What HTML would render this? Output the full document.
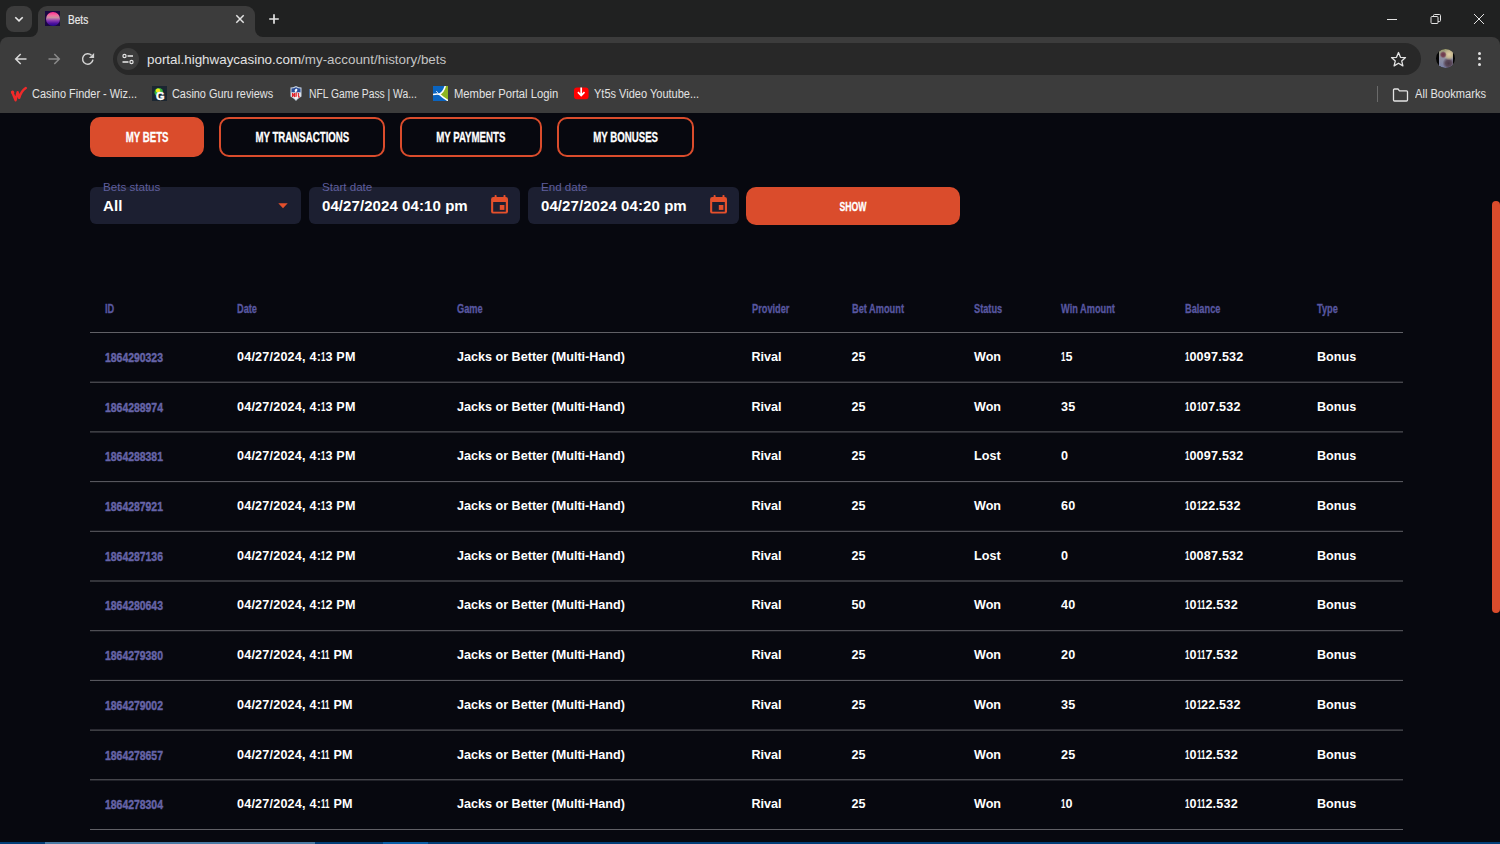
<!DOCTYPE html>
<html><head><meta charset="utf-8">
<style>
*{margin:0;padding:0;box-sizing:border-box}
html,body{width:1500px;height:844px;overflow:hidden;background:#07080f;font-family:"Liberation Sans",sans-serif}
.abs{position:absolute}
#tabstrip{position:absolute;left:0;top:0;width:1500px;height:50px;background:#202121}
#toolbar{position:absolute;left:0;top:37px;width:1500px;height:76px;background:#3c3c3c}
#page{position:absolute;left:0;top:113px;width:1500px;height:731px;background:#07080f;overflow:hidden}
.tbtxt{color:#e3e3e3;font-size:12px;white-space:nowrap}
.bm{position:absolute;top:85.5px;height:16px;font-size:12px;transform-origin:0 0;color:#e3e3e3;white-space:nowrap;line-height:16px}
.tabbtn{position:absolute;top:117px;height:40px;border-radius:10px;border:2px solid #da4c2c;color:#fff;font-weight:bold;font-size:14.5px;line-height:15px;display:flex;align-items:center;justify-content:center;padding-top:1px}
.cond{display:inline-block;transform:scaleX(0.667);white-space:nowrap;-webkit-text-stroke:0.3px #fff}
.field{position:absolute;top:187px;height:37px;background:#1c1f31;border-radius:6px}
.flabel{position:absolute;top:180px;font-size:11.6px;color:#5f5e9c;white-space:nowrap}
.fval{position:absolute;top:197px;font-size:15px;color:#fff;font-weight:bold;white-space:nowrap;letter-spacing:0.08px}
.th{position:absolute;top:302px;font-size:13px;line-height:13px;color:#5857a0;font-weight:bold;white-space:nowrap;transform:scaleX(0.71);transform-origin:0 0;-webkit-text-stroke:0.3px #5857a0}
.hl{position:absolute;left:90px;width:1313px;height:1px;background:#5c5c62}
.num{letter-spacing:0.2px}
.a1,.m1{display:inline-block;width:4.4px;transform:scaleX(0.63);transform-origin:0 50%;letter-spacing:0}

.td{position:absolute;font-size:12.6px;line-height:13px;color:#fff;font-weight:bold;white-space:nowrap}
.tid{position:absolute;font-size:13.2px;line-height:13px;color:#6664a8;font-weight:bold;white-space:nowrap;transform:scaleX(0.79);transform-origin:0 0;-webkit-text-stroke:0.45px #6664a8}
</style></head><body>
<div id="tabstrip"></div>
<div id="toolbar" style="border-radius:8px 8px 0 0"></div>
<!-- tab search -->
<div class="abs" style="left:6px;top:6px;width:26px;height:26px;border-radius:8px;background:#3c3c3c"></div>
<svg class="abs" style="left:13px;top:13px" width="12" height="12" viewBox="0 0 12 12"><path d="M2.3 4.2 L6 7.9 L9.7 4.2" stroke="#e8e8e8" stroke-width="1.6" fill="none"/></svg>
<!-- active tab -->
<div class="abs" style="left:30px;top:29px;width:233px;height:9px;background:#3c3c3c"></div>
<div class="abs" style="left:30px;top:29px;width:8px;height:8px;border-radius:0 0 8px 0;background:#202121"></div>
<div class="abs" style="left:255px;top:29px;width:8px;height:8px;border-radius:0 0 0 8px;background:#202121"></div>
<div class="abs" style="left:38px;top:6px;width:217px;height:32px;border-radius:9px 9px 0 0;background:#3c3c3c"></div>
<div class="abs" style="left:45px;top:11px;width:15px;height:15px;background:#1a0840"></div>
<div class="abs" style="left:45.5px;top:11.5px;width:14px;height:14px;border-radius:50%;background:linear-gradient(#ff2a90 0%,#f070a0 25%,#c890a0 40%,#9040b0 60%,#5010a0 80%,#20088a 100%)"></div>
<div class="abs tbtxt" style="left:68px;top:14px;font-size:12px;line-height:12px;color:#e8e8e8;transform:scaleX(0.84);transform-origin:0 0;-webkit-text-stroke:0.2px #e8e8e8">Bets</div>
<svg class="abs" style="left:235px;top:14px" width="10" height="10" viewBox="0 0 10 10"><path d="M1.3 1.3 L8.7 8.7 M8.7 1.3 L1.3 8.7" stroke="#e3e3e3" stroke-width="1.5"/></svg>
<svg class="abs" style="left:268px;top:13px" width="12" height="12" viewBox="0 0 12 12"><path d="M6 1.2 V10.8 M1.2 6 H10.8" stroke="#e3e3e3" stroke-width="1.7"/></svg>
<!-- window controls -->
<div class="abs" style="left:1387px;top:19px;width:10px;height:1px;background:#e3e3e3"></div>
<svg class="abs" style="left:1430px;top:13px" width="12" height="12" viewBox="0 0 12 12"><rect x="1" y="3.5" width="7" height="7" rx="1" stroke="#e3e3e3" stroke-width="1" fill="none"/><path d="M3.5 3.5 V2.5 a1 1 0 0 1 1-1 H9.5 a1 1 0 0 1 1 1 V7.5 a1 1 0 0 1-1 1 H8" stroke="#e3e3e3" stroke-width="1" fill="none"/></svg>
<svg class="abs" style="left:1473px;top:13px" width="12" height="12" viewBox="0 0 12 12"><path d="M1 1 L11 11 M11 1 L1 11" stroke="#e3e3e3" stroke-width="1"/></svg>

<!-- nav -->
<svg class="abs" style="left:13px;top:51px" width="16" height="16" viewBox="0 0 16 16"><path d="M13.5 8 H3 M7.7 3 L2.7 8 L7.7 13" stroke="#d8d8d8" stroke-width="1.5" fill="none"/></svg>
<svg class="abs" style="left:46px;top:51px" width="16" height="16" viewBox="0 0 16 16"><path d="M2.5 8 H13 M8.3 3 L13.3 8 L8.3 13" stroke="#8a8a8a" stroke-width="1.5" fill="none"/></svg>
<svg class="abs" style="left:80px;top:51px" width="16" height="16" viewBox="0 0 16 16"><path d="M12.95 8.72 A5.2 5.2 0 1 1 11.48 4.32" stroke="#d2d2d2" stroke-width="1.5" fill="none"/><path d="M14.1 1.9 V7.1 H8.9 Z" fill="#d2d2d2"/></svg>
<!-- omnibox -->
<div class="abs" style="left:113px;top:43px;width:1308px;height:32px;border-radius:16px;background:#282828"></div>
<div class="abs" style="left:117px;top:48px;width:22px;height:22px;border-radius:50%;background:#3c3c3c"></div>
<svg class="abs" style="left:121px;top:52px" width="14" height="14" viewBox="0 0 14 14"><circle cx="3.5" cy="4" r="1.6" stroke="#e3e3e3" stroke-width="1.2" fill="none"/><path d="M6.5 4 H12" stroke="#e3e3e3" stroke-width="1.6"/><circle cx="10.5" cy="10" r="1.6" stroke="#e3e3e3" stroke-width="1.2" fill="none"/><path d="M1.5 10 H7.5" stroke="#e3e3e3" stroke-width="1.6"/></svg>
<div class="abs" style="left:147px;top:52px;font-size:13.4px;color:#e3e3e3;white-space:nowrap">portal.highwaycasino.com<span style="color:#c4c4c4">/my-account/history/bets</span></div>
<svg class="abs" style="left:1390px;top:51px" width="17" height="17" viewBox="0 0 17 17"><path d="M8.5 1.5 L10.5 6.3 L15.5 6.6 L11.7 9.9 L12.9 14.9 L8.5 12.2 L4.1 14.9 L5.3 9.9 L1.5 6.6 L6.5 6.3 Z" stroke="#e3e3e3" stroke-width="1.3" fill="none" stroke-linejoin="round"/></svg>
<div class="abs" style="left:1436px;top:49px;width:19px;height:19px;border-radius:50%;background:#050505;overflow:hidden"><div style="position:absolute;left:2.5px;top:0px;width:14px;height:19px;background:radial-gradient(circle at 30% 30%,#6a3848 0,#7a4858 2px,transparent 3.5px),radial-gradient(circle at 72% 28%,#e0d0a8 0,#c8b890 3px,transparent 6px),radial-gradient(circle at 68% 75%,#4a3848 0,#5a4858 3px,transparent 6px),linear-gradient(180deg,#a0a070 0%,#9090a0 45%,#7a80a8 100%)"></div></div>
<div class="abs" style="left:1478px;top:52px;width:3px;height:3px;border-radius:50%;background:#e3e3e3"></div>
<div class="abs" style="left:1478px;top:57px;width:3px;height:3px;border-radius:50%;background:#e3e3e3"></div>
<div class="abs" style="left:1478px;top:63px;width:3px;height:3px;border-radius:50%;background:#e3e3e3"></div>
<!-- bookmarks -->
<svg class="abs" style="left:8px;top:82px" width="24" height="24" viewBox="0 0 24 24"><path d="M4.2 10 L7.6 18.3 L9.6 10.2 L11.2 15.8 Q13.5 8.5 17.8 6" stroke="#f02a2a" stroke-width="2.4" fill="none" stroke-linejoin="round" stroke-linecap="round"/><circle cx="4.6" cy="10.2" r="1.6" fill="#f02a2a"/></svg>
<div class="bm" style="left:32px;transform:scaleX(0.911)">Casino Finder - Wiz...</div>
<div class="abs" style="left:152px;top:86px;width:15px;height:15px;background:#1b2631"></div>
<svg class="abs" style="left:152px;top:86px" width="15" height="15" viewBox="0 0 15 15"><circle cx="6.8" cy="6.2" r="4.3" fill="#35b53c"/><circle cx="6" cy="4.6" r="2.2" fill="#f2e81a"/><path d="M5.5 14 V9 Q5.5 6.3 8.5 6.3 H12.5 V14 Z" fill="#1b2631"/></svg>
<div class="abs" style="left:156px;top:90.5px;font-size:11px;line-height:11px;font-weight:bold;color:#fff;-webkit-text-stroke:0.4px #fff">G</div>
<div class="bm" style="left:172px;transform:scaleX(0.908)">Casino Guru reviews</div>
<svg class="abs" style="left:290px;top:86px" width="12" height="15" viewBox="0 0 12 15"><path d="M0.5 1.5 Q3 1.5 6 0 Q9 1.5 11.5 1.5 V10.5 Q8 12.5 6 15 Q4 12.5 0.5 10.5 Z" fill="#c8d4e4"/><path d="M1.5 2.5 Q3.5 2.5 6 1.2 Q8.5 2.5 10.5 2.5 V6.5 H1.5 Z" fill="#2a4c96"/><ellipse cx="6" cy="4.3" rx="1.2" ry="1.7" fill="#fff" transform="rotate(30 6 4.3)"/><path d="M1.5 6.5 H10.5 V10 Q8 11.5 6 13.5 Q4 11.5 1.5 10 Z" fill="#f0f0f0"/><path d="M2.5 7 V11 M2.5 7 L4.5 11 V7 M6 7 V11 M6 7 H7.5 M6 9 H7.3 M8.6 7 V11 H10" stroke="#e0242c" stroke-width="1.1" fill="none"/></svg>
<div class="bm" style="left:309px;transform:scaleX(0.858)">NFL Game Pass | Wa...</div>
<svg class="abs" style="left:433px;top:86px" width="15" height="15" viewBox="0 0 15 15"><rect width="15" height="15" fill="#0a64c0"/><path d="M15 0 V15 Q10 11 7 8.5 Q11 5 12.5 0 Z" fill="#8fb520"/><path d="M12.3 0 Q10.5 6 6.5 8.3 Q10 11.5 15 14.6" stroke="#fff" stroke-width="1.6" fill="none"/><path d="M0 8.6 Q3.5 7.6 6.8 8.3" stroke="#fff" stroke-width="1.6" fill="none"/><path d="M3.2 5 L5.5 7.6" stroke="#fff" stroke-width="0.8" fill="none"/></svg>
<div class="bm" style="left:454px;transform:scaleX(0.935)">Member Portal Login</div>
<svg class="abs" style="left:574px;top:87px" width="15" height="13" viewBox="0 0 15 13"><rect x="0" y="0.6" width="14.6" height="11.6" rx="3" fill="#ff0000"/><path d="M7.2 0.5 V8.5 M3.9 5.2 L7.2 8.6 L10.5 5.2" stroke="#fff" stroke-width="1.7" fill="none"/></svg>
<div class="bm" style="left:594px;transform:scaleX(0.918)">Yt5s Video Youtube...</div>
<div class="abs" style="left:1377px;top:86px;width:1px;height:16px;background:#6a6a6a"></div>
<svg class="abs" style="left:1392px;top:88px" width="17" height="14" viewBox="0 0 17 14"><path d="M1.5 2 a1 1 0 0 1 1-1 H6 L7.5 2.8 H14.5 a1 1 0 0 1 1 1 V12 a1 1 0 0 1-1 1 H2.5 a1 1 0 0 1-1-1 Z" stroke="#e3e3e3" stroke-width="1.3" fill="none"/></svg>
<div class="bm" style="left:1415px;transform:scaleX(0.926)">All Bookmarks</div>

<div id="page"></div>
<!-- tabs -->
<div class="tabbtn" style="left:90px;width:114px;background:#da4c2c"><span class="cond">MY BETS</span></div>
<div class="tabbtn" style="left:219px;width:166px"><span class="cond">MY TRANSACTIONS</span></div>
<div class="tabbtn" style="left:400px;width:142px"><span class="cond">MY PAYMENTS</span></div>
<div class="tabbtn" style="left:557px;width:137px"><span class="cond">MY BONUSES</span></div>

<!-- filters -->
<div class="field" style="left:90px;width:211px"></div>
<div class="flabel" style="left:103px">Bets status</div>
<div class="fval" style="left:103px">All</div>
<svg class="abs" style="left:278px;top:203px" width="10" height="6" viewBox="0 0 10 6"><path d="M0.3 0.2 H9.7 L5 5.2 Z" fill="#e5502c"/></svg>
<div class="field" style="left:309px;width:211px"></div>
<div class="flabel" style="left:322px">Start date</div>
<div class="fval" style="left:322px">04/27/2024 04:10 pm</div>
<svg class="abs" style="left:491px;top:195px" width="17" height="19" viewBox="0 0 17 19"><rect x="0.1" y="2" width="16.9" height="16.6" rx="2.2" fill="#e5502c"/><rect x="2.2" y="7" width="12.6" height="9.7" fill="#1c1f31"/><rect x="8.8" y="10" width="4.6" height="4.9" fill="#e5502c"/><rect x="3.6" y="0" width="2" height="3" rx="0.8" fill="#e5502c"/><rect x="12.5" y="0" width="2" height="3" rx="0.8" fill="#e5502c"/></svg>
<div class="field" style="left:528px;width:211px"></div>
<div class="flabel" style="left:541px">End date</div>
<div class="fval" style="left:541px">04/27/2024 04:20 pm</div>
<svg class="abs" style="left:710px;top:195px" width="17" height="19" viewBox="0 0 17 19"><rect x="0.1" y="2" width="16.9" height="16.6" rx="2.2" fill="#e5502c"/><rect x="2.2" y="7" width="12.6" height="9.7" fill="#1c1f31"/><rect x="8.8" y="10" width="4.6" height="4.9" fill="#e5502c"/><rect x="3.6" y="0" width="2" height="3" rx="0.8" fill="#e5502c"/><rect x="12.5" y="0" width="2" height="3" rx="0.8" fill="#e5502c"/></svg>
<div class="abs" style="left:746px;top:187px;width:214px;height:38px;border-radius:10px;background:#da4c2c;color:#fff;font-weight:bold;font-size:13.5px;line-height:14px;display:flex;align-items:center;justify-content:center;padding-top:1px"><span class="cond" style="transform:scaleX(0.645)">SHOW</span></div>

<!-- table -->
<div class="th" style="left:105px">ID</div>
<div class="th" style="left:237px">Date</div>
<div class="th" style="left:457px">Game</div>
<div class="th" style="left:751.5px">Provider</div>
<div class="th" style="left:851.5px">Bet Amount</div>
<div class="th" style="left:974px">Status</div>
<div class="th" style="left:1061px">Win Amount</div>
<div class="th" style="left:1185px">Balance</div>
<div class="th" style="left:1317px">Type</div>
<svg class="abs" style="left:90px;top:332px" width="1313" height="500" viewBox="0 0 1313 500" fill="#606066"><rect x="0" y="0.00" width="1313" height="1"/><rect x="0" y="49.70" width="1313" height="1"/><rect x="0" y="99.40" width="1313" height="1"/><rect x="0" y="149.10" width="1313" height="1"/><rect x="0" y="198.80" width="1313" height="1"/><rect x="0" y="248.50" width="1313" height="1"/><rect x="0" y="298.20" width="1313" height="1"/><rect x="0" y="347.90" width="1313" height="1"/><rect x="0" y="397.60" width="1313" height="1"/><rect x="0" y="447.30" width="1313" height="1"/><rect x="0" y="497.00" width="1313" height="1"/></svg>
<div class="tid" style="left:105px;top:351px">1864290323</div>
<div class="td num" style="left:237px;top:351px">04/27/2024, 4:<span class="m1">1</span>3 PM</div>
<div class="td" style="left:457px;top:351px">Jacks or Better (Multi-Hand)</div>
<div class="td" style="left:751.5px;top:351px">Rival</div>
<div class="td" style="left:851.5px;top:351px">25</div>
<div class="td" style="left:974px;top:351px">Won</div>
<div class="td num" style="left:1061px;top:351px"><span class="a1">1</span>5</div>
<div class="td num" style="left:1185px;top:351px"><span class="a1">1</span>0097.532</div>
<div class="td" style="left:1317px;top:351px">Bonus</div>
<div class="tid" style="left:105px;top:401px">1864288974</div>
<div class="td num" style="left:237px;top:401px">04/27/2024, 4:<span class="m1">1</span>3 PM</div>
<div class="td" style="left:457px;top:401px">Jacks or Better (Multi-Hand)</div>
<div class="td" style="left:751.5px;top:401px">Rival</div>
<div class="td" style="left:851.5px;top:401px">25</div>
<div class="td" style="left:974px;top:401px">Won</div>
<div class="td num" style="left:1061px;top:401px">35</div>
<div class="td num" style="left:1185px;top:401px"><span class="a1">1</span>0<span class="m1">1</span>07.532</div>
<div class="td" style="left:1317px;top:401px">Bonus</div>
<div class="tid" style="left:105px;top:450px">1864288381</div>
<div class="td num" style="left:237px;top:450px">04/27/2024, 4:<span class="m1">1</span>3 PM</div>
<div class="td" style="left:457px;top:450px">Jacks or Better (Multi-Hand)</div>
<div class="td" style="left:751.5px;top:450px">Rival</div>
<div class="td" style="left:851.5px;top:450px">25</div>
<div class="td" style="left:974px;top:450px">Lost</div>
<div class="td num" style="left:1061px;top:450px">0</div>
<div class="td num" style="left:1185px;top:450px"><span class="a1">1</span>0097.532</div>
<div class="td" style="left:1317px;top:450px">Bonus</div>
<div class="tid" style="left:105px;top:500px">1864287921</div>
<div class="td num" style="left:237px;top:500px">04/27/2024, 4:<span class="m1">1</span>3 PM</div>
<div class="td" style="left:457px;top:500px">Jacks or Better (Multi-Hand)</div>
<div class="td" style="left:751.5px;top:500px">Rival</div>
<div class="td" style="left:851.5px;top:500px">25</div>
<div class="td" style="left:974px;top:500px">Won</div>
<div class="td num" style="left:1061px;top:500px">60</div>
<div class="td num" style="left:1185px;top:500px"><span class="a1">1</span>0<span class="m1">1</span>22.532</div>
<div class="td" style="left:1317px;top:500px">Bonus</div>
<div class="tid" style="left:105px;top:550px">1864287136</div>
<div class="td num" style="left:237px;top:550px">04/27/2024, 4:<span class="m1">1</span>2 PM</div>
<div class="td" style="left:457px;top:550px">Jacks or Better (Multi-Hand)</div>
<div class="td" style="left:751.5px;top:550px">Rival</div>
<div class="td" style="left:851.5px;top:550px">25</div>
<div class="td" style="left:974px;top:550px">Lost</div>
<div class="td num" style="left:1061px;top:550px">0</div>
<div class="td num" style="left:1185px;top:550px"><span class="a1">1</span>0087.532</div>
<div class="td" style="left:1317px;top:550px">Bonus</div>
<div class="tid" style="left:105px;top:599px">1864280643</div>
<div class="td num" style="left:237px;top:599px">04/27/2024, 4:<span class="m1">1</span>2 PM</div>
<div class="td" style="left:457px;top:599px">Jacks or Better (Multi-Hand)</div>
<div class="td" style="left:751.5px;top:599px">Rival</div>
<div class="td" style="left:851.5px;top:599px">50</div>
<div class="td" style="left:974px;top:599px">Won</div>
<div class="td num" style="left:1061px;top:599px">40</div>
<div class="td num" style="left:1185px;top:599px"><span class="a1">1</span>0<span class="m1">1</span><span class="m1">1</span>2.532</div>
<div class="td" style="left:1317px;top:599px">Bonus</div>
<div class="tid" style="left:105px;top:649px">1864279380</div>
<div class="td num" style="left:237px;top:649px">04/27/2024, 4:<span class="m1">1</span><span class="m1">1</span> PM</div>
<div class="td" style="left:457px;top:649px">Jacks or Better (Multi-Hand)</div>
<div class="td" style="left:751.5px;top:649px">Rival</div>
<div class="td" style="left:851.5px;top:649px">25</div>
<div class="td" style="left:974px;top:649px">Won</div>
<div class="td num" style="left:1061px;top:649px">20</div>
<div class="td num" style="left:1185px;top:649px"><span class="a1">1</span>0<span class="m1">1</span><span class="m1">1</span>7.532</div>
<div class="td" style="left:1317px;top:649px">Bonus</div>
<div class="tid" style="left:105px;top:699px">1864279002</div>
<div class="td num" style="left:237px;top:699px">04/27/2024, 4:<span class="m1">1</span><span class="m1">1</span> PM</div>
<div class="td" style="left:457px;top:699px">Jacks or Better (Multi-Hand)</div>
<div class="td" style="left:751.5px;top:699px">Rival</div>
<div class="td" style="left:851.5px;top:699px">25</div>
<div class="td" style="left:974px;top:699px">Won</div>
<div class="td num" style="left:1061px;top:699px">35</div>
<div class="td num" style="left:1185px;top:699px"><span class="a1">1</span>0<span class="m1">1</span>22.532</div>
<div class="td" style="left:1317px;top:699px">Bonus</div>
<div class="tid" style="left:105px;top:749px">1864278657</div>
<div class="td num" style="left:237px;top:749px">04/27/2024, 4:<span class="m1">1</span><span class="m1">1</span> PM</div>
<div class="td" style="left:457px;top:749px">Jacks or Better (Multi-Hand)</div>
<div class="td" style="left:751.5px;top:749px">Rival</div>
<div class="td" style="left:851.5px;top:749px">25</div>
<div class="td" style="left:974px;top:749px">Won</div>
<div class="td num" style="left:1061px;top:749px">25</div>
<div class="td num" style="left:1185px;top:749px"><span class="a1">1</span>0<span class="m1">1</span><span class="m1">1</span>2.532</div>
<div class="td" style="left:1317px;top:749px">Bonus</div>
<div class="tid" style="left:105px;top:798px">1864278304</div>
<div class="td num" style="left:237px;top:798px">04/27/2024, 4:<span class="m1">1</span><span class="m1">1</span> PM</div>
<div class="td" style="left:457px;top:798px">Jacks or Better (Multi-Hand)</div>
<div class="td" style="left:751.5px;top:798px">Rival</div>
<div class="td" style="left:851.5px;top:798px">25</div>
<div class="td" style="left:974px;top:798px">Won</div>
<div class="td num" style="left:1061px;top:798px"><span class="a1">1</span>0</div>
<div class="td num" style="left:1185px;top:798px"><span class="a1">1</span>0<span class="m1">1</span><span class="m1">1</span>2.532</div>
<div class="td" style="left:1317px;top:798px">Bonus</div>
<!-- scrollbar -->
<div class="abs" style="left:1492px;top:201px;width:8px;height:412px;border-radius:4px;background:#da4c2c"></div>
<!-- taskbar hint -->
<div class="abs" style="left:0;top:842px;width:1500px;height:2px;background:#033f78"></div>
<div class="abs" style="left:45px;top:842px;width:270px;height:2px;background:#4a7ba4"></div>
<div class="abs" style="left:383px;top:842px;width:45px;height:2px;background:#0a5fa8"></div>
</body></html>
